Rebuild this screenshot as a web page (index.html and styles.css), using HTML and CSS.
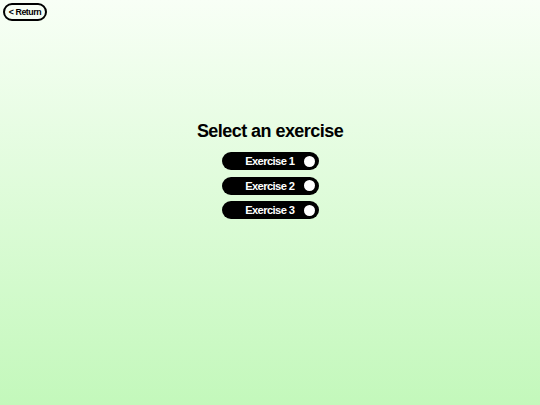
FILE: index.html
```html
<!DOCTYPE html>
<html>
<head>
<meta charset="utf-8">
<link rel="stylesheet" href="styles.css">
</head>
<body>
<div class="page">
  <div class="topbar">
    <button class="return">&lt; Return</button>
  </div>
  <main class="menu">
    <h1 class="title">Select an exercise</h1>
    <div class="list">
      <button class="exercise"><span class="label">Exercise 1</span><span class="dot"></span></button>
      <button class="exercise"><span class="label">Exercise 2</span><span class="dot"></span></button>
      <button class="exercise"><span class="label">Exercise 3</span><span class="dot"></span></button>
    </div>
  </main>
</div>
</body>
</html>
```
FILE: styles.css
```css
html, body {
  margin: 0;
  padding: 0;
}
body {
  width: 540px;
  height: 405px;
  overflow: hidden;
  background: linear-gradient(to bottom, #f8fff6 0%, #c3f8bb 100%);
  font-family: "Liberation Sans", Arial, sans-serif;
}
.page {
  display: flex;
  flex-direction: column;
  height: 100%;
}
.topbar {
  display: flex;
  padding: 3px 0 0 3px;
}
.return {
  box-sizing: border-box;
  width: 44px;
  height: 18px;
  padding: 0;
  border: 2px solid #000;
  border-radius: 9px;
  background: transparent;
  font-family: "Liberation Sans", Arial, sans-serif;
  font-weight: bold;
  font-size: 8.8px;
  letter-spacing: -0.45px;
  color: #000;
}
.menu {
  display: flex;
  flex-direction: column;
  align-items: center;
  margin-top: 100px;
}
.title {
  margin: 0;
  font-size: 18px;
  line-height: 21px;
  letter-spacing: -0.55px;
  font-weight: bold;
  color: #000;
}
.list {
  display: flex;
  flex-direction: column;
  align-items: center;
  gap: 6.5px;
  margin-top: 10px;
}
.exercise {
  box-sizing: border-box;
  display: flex;
  align-items: center;
  justify-content: flex-end;
  gap: 9px;
  width: 97px;
  height: 18px;
  padding: 0 4px 0 0;
  border: none;
  border-radius: 9px;
  background: #000;
  color: #fff;
  font-family: "Liberation Sans", Arial, sans-serif;
  font-weight: bold;
  font-size: 11.2px;
  letter-spacing: -0.6px;
}
.dot {
  width: 11px;
  height: 11px;
  border-radius: 50%;
  background: #fff;
}
```
